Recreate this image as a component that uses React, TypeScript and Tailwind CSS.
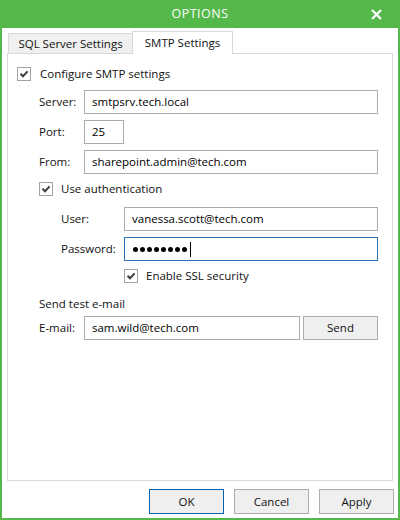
function Check({ className = "" }: { className?: string }) {
  return (
    <span className={`w-[14px] h-[14px] shrink-0 border border-[#a3a3a3] bg-white flex items-center justify-center ${className}`}>
      <svg width="10" height="10" viewBox="0 0 10 10">
        <polyline points="1.5,4.8 4,7.3 8.6,2.4" fill="none" stroke="#404040" strokeWidth="2" />
      </svg>
    </span>
  );
}

function Field({ value, className = "" }: { value: string; className?: string }) {
  return (
    <div className={`h-[24px] border border-[#acacac] bg-white flex items-center pl-[7px] text-black ${className}`}>
      {value}
    </div>
  );
}

function Btn({ label, focused }: { label: string; focused?: boolean }) {
  return (
    <div
      className={`w-[75px] h-[25px] flex items-center justify-center bg-[#efefef] border ${
        focused ? "border-[#0063b1]" : "border-[#adadad]"
      }`}
    >
      {label}
    </div>
  );
}

export default function App() {
  return (
    <div
      className="w-[400px] h-[520px] bg-white border-x-2 border-b-2 border-[#55b84b] flex flex-col text-[11.5px] text-[#111]"
      style={{ fontFamily: '"Open Sans", "Noto Sans", sans-serif' }}
    >
      {/* title bar */}
      <div className="-mx-[2px] h-[28px] shrink-0 bg-[#55b84b] flex items-center text-white">
        <div className="w-[40px]" />
        <div className="flex-1 text-center text-[12.5px] tracking-[0.5px]">OPTIONS</div>
        <div className="w-[40px] flex items-center pl-[11px]">
          <svg width="11" height="11" viewBox="0 0 11 11">
            <path d="M1 1 L10 10 M10 1 L1 10" stroke="white" strokeWidth="2.2" />
          </svg>
        </div>
      </div>

      {/* tabs */}
      <div className="ml-[6px] h-[25px] flex items-end">
        <div className="w-[124px] h-[20px] bg-[#f0f0f0] border-t border-l border-[#d9d9d9] flex items-center justify-center">
          SQL Server Settings
        </div>
        <div className="relative z-10 -mb-px w-[101px] h-[23px] bg-white border border-b-0 border-[#d9d9d9] flex items-center justify-center pb-[1px]">
          SMTP Settings
        </div>
      </div>

      {/* panel */}
      <div className="mx-[5px] h-[428px] border border-[#d9d9d9] flex flex-col">
        <div className="mt-[13px] ml-[9px] flex items-center gap-[9px] h-[14px]">
          <Check />
          <span>Configure SMTP settings</span>
        </div>

        <div className="ml-[31px] mr-[14px] flex flex-col">
          <div className="mt-[9px] flex items-center">
            <span className="w-[45px]">Server:</span>
            <Field value="smtpsrv.tech.local" className="flex-1" />
          </div>
          <div className="mt-[6px] flex items-center">
            <span className="w-[45px]">Port:</span>
            <Field value="25" className="w-[40px]" />
          </div>
          <div className="mt-[6px] flex items-center">
            <span className="w-[45px]">From:</span>
            <Field value="sharepoint.admin@tech.com" className="flex-1" />
          </div>

          <div className="mt-[8px] flex items-center gap-[8px] h-[14px]">
            <Check />
            <span>Use authentication</span>
          </div>

          <div className="ml-[22px] flex flex-col">
            <div className="mt-[11px] flex items-center">
              <span className="w-[63px]">User:</span>
              <Field value="vanessa.scott@tech.com" className="flex-1" />
            </div>
            <div className="mt-[6px] flex items-center">
              <span className="w-[63px]">Password:</span>
              <div className="flex-1 h-[24px] border border-[#2a72b5] bg-white flex items-center pl-[8px] gap-[2px]">
                {[0, 1, 2, 3, 4, 5, 6, 7].map((i) => (
                  <span key={i} className="w-[5px] h-[5px] rounded-full bg-black" />
                ))}
                <span className="w-px h-[15px] bg-black ml-[1px]" />
              </div>
            </div>
            <div className="mt-[8px] ml-[63px] flex items-center gap-[8px] h-[14px]">
              <Check />
              <span>Enable SSL security</span>
            </div>
          </div>

          <div className="mt-[13px] h-[16px] flex items-center">Send test e-mail</div>
          <div className="mt-[4px] flex items-center">
            <span className="w-[45px]">E-mail:</span>
            <Field value="sam.wild@tech.com" className="w-[216px]" />
            <div className="ml-[3px] w-[75px] h-[24px] bg-[#efefef] border border-[#adadad] flex items-center justify-center">
              Send
            </div>
          </div>
        </div>
      </div>

      {/* buttons */}
      <div className="mt-[8px] mr-[4px] flex justify-end gap-[10px]">
        <Btn label="OK" focused />
        <Btn label="Cancel" />
        <Btn label="Apply" />
      </div>
    </div>
  );
}
